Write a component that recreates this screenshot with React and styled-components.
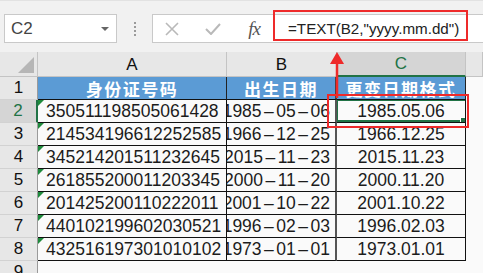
import React from "react";
import styled, { createGlobalStyle, css } from "styled-components";

const Global = createGlobalStyle`
  html, body { margin: 0; padding: 0; background: #f4f4f4; }
  body { font-family: "Liberation Sans", Arial, sans-serif; overflow: hidden; }
`;

const Screen = styled.div`
  position: relative;
  width: 483px;
  height: 273px;
  overflow: hidden;
  background: #f9f9f9;
`;

const Toolbar = styled.div`
  height: 52px;
  box-sizing: border-box;
  padding: 13px 0 0 4px;
  display: flex;
  align-items: flex-start;
  background: #f1f1f1;
  border-top: 1px solid #e2e2e2;
`;

const NameBox = styled.div`
  width: 113px;
  height: 29px;
  box-sizing: border-box;
  background: #fff;
  border: 1px solid #c9c9c9;
  display: flex;
  align-items: center;
  justify-content: space-between;
  padding: 0 7px 0 6px;
  font-size: 17px;
  color: #444;
`;

const Caret = styled.span`
  width: 0;
  height: 0;
  border-left: 4px solid transparent;
  border-right: 4px solid transparent;
  border-top: 4px solid #666;
`;

const Grip = styled.div`
  width: 35px;
  height: 29px;
  display: flex;
  align-items: center;
  justify-content: center;
`;

const FormulaBox = styled.div`
  flex: 1;
  height: 29px;
  box-sizing: border-box;
  background: #fff;
  border: 1px solid #c9c9c9;
  border-right: none;
  display: flex;
  align-items: center;
`;

const ToolIcon = styled.div`
  width: ${(p) => p.$w}px;
  height: 27px;
  display: flex;
  align-items: center;
  justify-content: center;
`;

const Fx = styled.span`
  font-family: "Liberation Serif", "Times New Roman", serif;
  font-style: italic;
  font-size: 19px;
  color: #555;
  letter-spacing: -1px;
`;

const FormulaText = styled.div`
  padding-left: 15px;
  font-size: 15.2px;
  color: #222;
  white-space: nowrap;
`;

const Sheet = styled.div`
  display: grid;
  grid-template-columns: 38px 189px 110px 129px 1fr;
  grid-auto-rows: 23px;
  grid-template-rows: 25px;
`;

const Corner = styled.div`
  position: relative;
  background: #e7e7e7;
  border-bottom: 1px solid #c4c4c4;
  border-right: 1px solid #c4c4c4;
  box-sizing: border-box;
  &::after {
    content: "";
    position: absolute;
    right: 3px;
    bottom: 3px;
    width: 0;
    height: 0;
    border-left: 16px solid transparent;
    border-bottom: 16px solid #b6b6b6;
  }
`;

const ColHead = styled.div`
  box-sizing: border-box;
  background: ${(p) => (p.$active ? "#d5d5d5" : "#e7e7e7")};
  color: ${(p) => (p.$active ? "#217346" : "#111")};
  border-right: 1px solid #c4c4c4;
  border-bottom: ${(p) => (p.$active ? "2px solid #217346" : "1px solid #c4c4c4")};
  display: flex;
  align-items: center;
  justify-content: center;
  font-size: 17px;
  padding-top: 1px;
`;

const RowHead = styled.div`
  box-sizing: border-box;
  background: ${(p) => (p.$active ? "#d5d5d5" : "#e7e7e7")};
  color: ${(p) => (p.$active ? "#217346" : "#111")};
  border-bottom: 1px solid #d2d2d2;
  border-right: ${(p) => (p.$active ? "2px solid #217346" : "1px solid #9a9a9a")};
  display: flex;
  align-items: center;
  justify-content: center;
  font-size: 17px;
`;

const Cell = styled.div`
  position: relative;
  box-sizing: border-box;
  background: #fafafa;
  border-right: ${(p) => (p.$thick ? "2px solid #555" : "1px solid #111")};
  border-bottom: 1px solid #111;
  font-size: 17.5px;
  color: #1c1c1c;
  display: flex;
  align-items: center;
  overflow: hidden;
  white-space: nowrap;
  justify-content: ${(p) => (p.$align === "right" ? "flex-end" : p.$align === "center" ? "center" : "flex-start")};
  padding: ${(p) => (p.$align === "right" ? "0 5px 0 0" : p.$align === "center" ? "0" : "0 0 0 8px")};
  ${(p) =>
    p.$flag &&
    css`
      &::before {
        content: "";
        position: absolute;
        left: 0;
        top: 0;
        border-top: 6px solid #1e8a3c;
        border-right: 6px solid transparent;
      }
    `}
  ${(p) =>
    p.$selected &&
    css`
      &::after {
        content: "";
        position: absolute;
        inset: -1px -2px 0 -1px;
        border: 2px solid #217346;
      }
    `}
`;

const HeadCell = styled.div`
  box-sizing: border-box;
  background: #5b9bd5;
  color: #fff;
  border-right: ${(p) => (p.$thick ? "2px solid #3c3c3c" : "1px solid #222")};
  border-bottom: 1px solid #111;
  display: flex;
  align-items: center;
  justify-content: center;
  font-family: "Noto Sans CJK SC", "Liberation Sans", sans-serif;
  font-weight: 700;
  font-size: 17px;
  letter-spacing: 1.5px;
  overflow: hidden;
  white-space: nowrap;
`;

const Blank = styled.div`
  background: #fafafa;
`;

const Dash = styled.span`
  margin: 0 2.5px;
`;

const Handle = styled.span`
  position: absolute;
  right: -3px;
  bottom: -3px;
  width: 6px;
  height: 6px;
  background: #217346;
  border: 1px solid #fff;
  z-index: 2;
`;

const RedBox = styled.div`
  position: absolute;
  left: ${(p) => p.$x}px;
  top: ${(p) => p.$y}px;
  width: ${(p) => p.$w}px;
  height: ${(p) => p.$h}px;
  box-sizing: border-box;
  border: 2.5px solid #ee2a2a;
  pointer-events: none;
`;

const ArrowSvg = styled.svg`
  position: absolute;
  left: 328px;
  top: 50px;
`;

const rows = [
  ["350511198505061428", "1985-05-06", "1985.05.06"],
  ["214534196612252585", "1966-12-25", "1966.12.25"],
  ["345214201511232645", "2015-11-23", "2015.11.23"],
  ["261855200011203345", "2000-11-20", "2000.11.20"],
  ["201425200110222011", "2001-10-22", "2001.10.22"],
  ["440102199602030521", "1996-02-03", "1996.02.03"],
  ["432516197301010102", "1973-01-01", "1973.01.01"],
];

const DateDash = ({ text }) => {
  const parts = text.split("-");
  return (
    <span>
      {parts[0]}
      <Dash>–</Dash>
      {parts[1]}
      <Dash>–</Dash>
      {parts[2]}
    </span>
  );
};

export default function App() {
  return (
    <Screen>
      <Global />
      <Toolbar>
        <NameBox>
          C2
          <Caret />
        </NameBox>
        <Grip>
          <svg width="4" height="14" viewBox="0 0 4 14">
            <rect x="1" y="0" width="2" height="2" fill="#9a9a9a" />
            <rect x="1" y="4" width="2" height="2" fill="#9a9a9a" />
            <rect x="1" y="8" width="2" height="2" fill="#9a9a9a" />
            <rect x="1" y="12" width="2" height="2" fill="#9a9a9a" />
          </svg>
        </Grip>
        <FormulaBox>
          <ToolIcon $w={38}>
            <svg width="14" height="14" viewBox="0 0 14 14">
              <path d="M1 1 L13 13 M13 1 L1 13" stroke="#b9b9b9" strokeWidth="1.6" fill="none" />
            </svg>
          </ToolIcon>
          <ToolIcon $w={44}>
            <svg width="16" height="12" viewBox="0 0 16 12">
              <path d="M1 6 L6 11 L15 1" stroke="#b9b9b9" strokeWidth="2" fill="none" />
            </svg>
          </ToolIcon>
          <ToolIcon $w={38}>
            <Fx>fx</Fx>
          </ToolIcon>
          <FormulaText>=TEXT(B2,"yyyy.mm.dd")</FormulaText>
        </FormulaBox>
      </Toolbar>
      <Sheet>
        <Corner />
        <ColHead>A</ColHead>
        <ColHead>B</ColHead>
        <ColHead $active>C</ColHead>
        <ColHead />

        <RowHead>1</RowHead>
        <HeadCell>身份证号码</HeadCell>
        <HeadCell $thick>出生日期</HeadCell>
        <HeadCell>更变日期格式</HeadCell>
        <Blank />

        {rows.map((r, i) => (
          <React.Fragment key={i}>
            <RowHead $active={i === 0}>{i + 2}</RowHead>
            <Cell $flag>{r[0]}</Cell>
            <Cell $align="right" $thick>
              <DateDash text={r[1]} />
            </Cell>
            <Cell $align="center" $selected={i === 0}>
              {r[2]}
              {i === 0 && <Handle />}
            </Cell>
            <Blank />
          </React.Fragment>
        ))}

        <RowHead>9</RowHead>
        <Blank />
        <Blank />
        <Blank />
        <Blank />
      </Sheet>

      <RedBox $x={273} $y={10} $w={195} $h={31} />
      <RedBox $x={327} $y={94} $w={142} $h={34} />
      <ArrowSvg width="18" height="48" viewBox="0 0 18 48">
        <path d="M9 12 L9 48" stroke="#ee2a2a" strokeWidth="2.5" fill="none" />
        <path d="M2 14 L9 2 L16 14 Z" fill="#ee2a2a" />
      </ArrowSvg>
    </Screen>
  );
}
